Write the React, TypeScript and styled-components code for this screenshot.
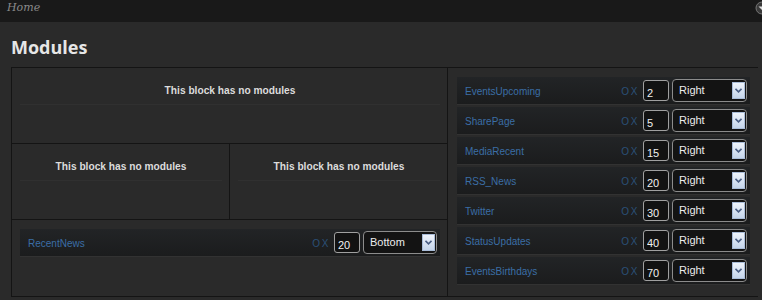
import React from 'react';
import styled, { createGlobalStyle } from 'styled-components';

const GlobalStyle = createGlobalStyle`
  html, body {
    margin: 0;
    padding: 0;
    background: #2a2a2a;
  }
  body {
    font-family: "Liberation Sans", Arial, sans-serif;
    color: #ddd;
  }
`;

const TopBar = styled.div`
  height: 22px;
  background: #191919;
  display: flex;
  align-items: center;
  justify-content: space-between;
  overflow: hidden;
  padding-left: 7px;
  box-sizing: border-box;

  .home {
    font-family: "DejaVu Serif", "Liberation Serif", serif;
    font-style: italic;
    font-size: 11px;
    color: #8a8a8a;
    margin-top: -7px;
  }
`;

const Page = styled.div`
  padding: 0 4px 0 11px;
`;

const Title = styled.h1`
  margin: 0;
  padding: 13px 0 7px;
  font-family: "Open Sans", sans-serif;
  font-weight: 700;
  font-size: 18px;
  line-height: 25px;
  color: #e6e6e6;
`;

const Container = styled.div`
  display: grid;
  grid-template-columns: 436px 1fr;
  border: 1px solid #141414;
  border-right: none;
  height: 228px;
`;

const LeftCol = styled.div`
  display: flex;
  flex-direction: column;
  border-right: 1px solid #141414;
`;

const BlockRow = styled.div`
  display: flex;
  border-bottom: 1px solid #141414;
  &:last-child {
    border-bottom: none;
    flex: 1;
  }
`;

const Block = styled.div`
  flex: 1;
  height: 75px;
  box-sizing: border-box;
  padding: 9px 7px 0 8px;
  & + & {
    border-left: 1px solid #141414;
  }
`;

const EmptyHeader = styled.div`
  height: 28px;
  border-bottom: 1px solid #303030;
  display: flex;
  align-items: center;
  justify-content: center;
  font-size: 10.2px;
  font-weight: 700;
  color: #dcdcdc;
  box-sizing: border-box;
`;

const RightCol = styled.div`
  padding: 9px 8px 0 9px;
  display: flex;
  flex-direction: column;
  gap: 2px;
`;

const ModuleRow = styled.div`
  height: 28px;
  display: flex;
  align-items: center;
  padding: 0 3px 0 8px;
  background: linear-gradient(#222426, #1b1c1d);
  border-bottom: 1px solid #323232;
  box-sizing: border-box;
`;

const ModuleName = styled.a`
  flex: 1;
  font-size: 10px;
  color: #3b6ea6;
  text-decoration: none;
  padding-top: 1px;
`;

const Actions = styled.span`
  font-size: 10px;
  color: #2b5078;
  margin-right: 6px;
  padding-top: 1px;
  letter-spacing: -0.5px;
`;

const OrderInput = styled.input`
  width: 26px;
  height: 21px;
  box-sizing: border-box;
  border: 1px solid #a0a0a0;
  border-radius: 3px;
  background: #121212;
  color: #f0f0f0;
  font-family: "Liberation Sans", Arial, sans-serif;
  font-size: 11px;
  padding: 4px 0 0 3px;
  margin-right: 3px;
  outline: none;
`;

const Select = styled.div<{ $width: number }>`
  width: ${(p) => p.$width}px;
  height: 23px;
  box-sizing: border-box;
  border: 1px solid #8c8c8c;
  border-radius: 4px;
  background: #131313;
  display: flex;
  align-items: center;
  justify-content: space-between;
  padding: 0 1px 1px 6px;
  font-size: 11px;
  color: #ececec;
`;

const Arrow = styled.span`
  width: 13px;
  height: 17px;
  background: linear-gradient(#eef3fb, #c4d4ea);
  border: 1px solid #a9bcd8;
  box-sizing: border-box;
  display: flex;
  align-items: center;
  justify-content: center;
`;

const Chevron = () => (
  <svg width="7" height="5" viewBox="0 0 7 5">
    <path d="M0.5 0.8 L3.5 3.8 L6.5 0.8" fill="none" stroke="#4a5e84" strokeWidth="1.6" />
  </svg>
);

const Row: React.FC<{ name: string; order: number; position: string; selectWidth: number }> = ({
  name,
  order,
  position,
  selectWidth,
}) => (
  <ModuleRow>
    <ModuleName href="#">{name}</ModuleName>
    <Actions>O X</Actions>
    <OrderInput defaultValue={order} />
    <Select $width={selectWidth}>
      {position}
      <Arrow>
        <Chevron />
      </Arrow>
    </Select>
  </ModuleRow>
);

const rightModules = [
  { name: 'EventsUpcoming', order: 2 },
  { name: 'SharePage', order: 5 },
  { name: 'MediaRecent', order: 15 },
  { name: 'RSS_News', order: 20 },
  { name: 'Twitter', order: 30 },
  { name: 'StatusUpdates', order: 40 },
  { name: 'EventsBirthdays', order: 70 },
];

const App: React.FC = () => (
  <>
    <GlobalStyle />
    <TopBar>
      <span className="home">Home</span>
      <svg width="14" height="14" viewBox="0 0 14 14" style={{ marginRight: -7, marginTop: -7 }}>
        <circle cx="7" cy="7" r="6" fill="#3a3a3a" stroke="#777" strokeWidth="1" />
        <path d="M3.5 5.5 H10.5 L7 9 Z" fill="#ddd" />
      </svg>
    </TopBar>
    <Page>
      <Title>Modules</Title>
      <Container>
        <LeftCol>
          <BlockRow>
            <Block>
              <EmptyHeader>This block has no modules</EmptyHeader>
            </Block>
          </BlockRow>
          <BlockRow>
            <Block>
              <EmptyHeader>This block has no modules</EmptyHeader>
            </Block>
            <Block>
              <EmptyHeader>This block has no modules</EmptyHeader>
            </Block>
          </BlockRow>
          <BlockRow>
            <Block>
              <Row name="RecentNews" order={20} position="Bottom" selectWidth={74} />
            </Block>
          </BlockRow>
        </LeftCol>
        <RightCol>
          {rightModules.map((m) => (
            <Row key={m.name} name={m.name} order={m.order} position="Right" selectWidth={75} />
          ))}
        </RightCol>
      </Container>
    </Page>
  </>
);

export default App;
